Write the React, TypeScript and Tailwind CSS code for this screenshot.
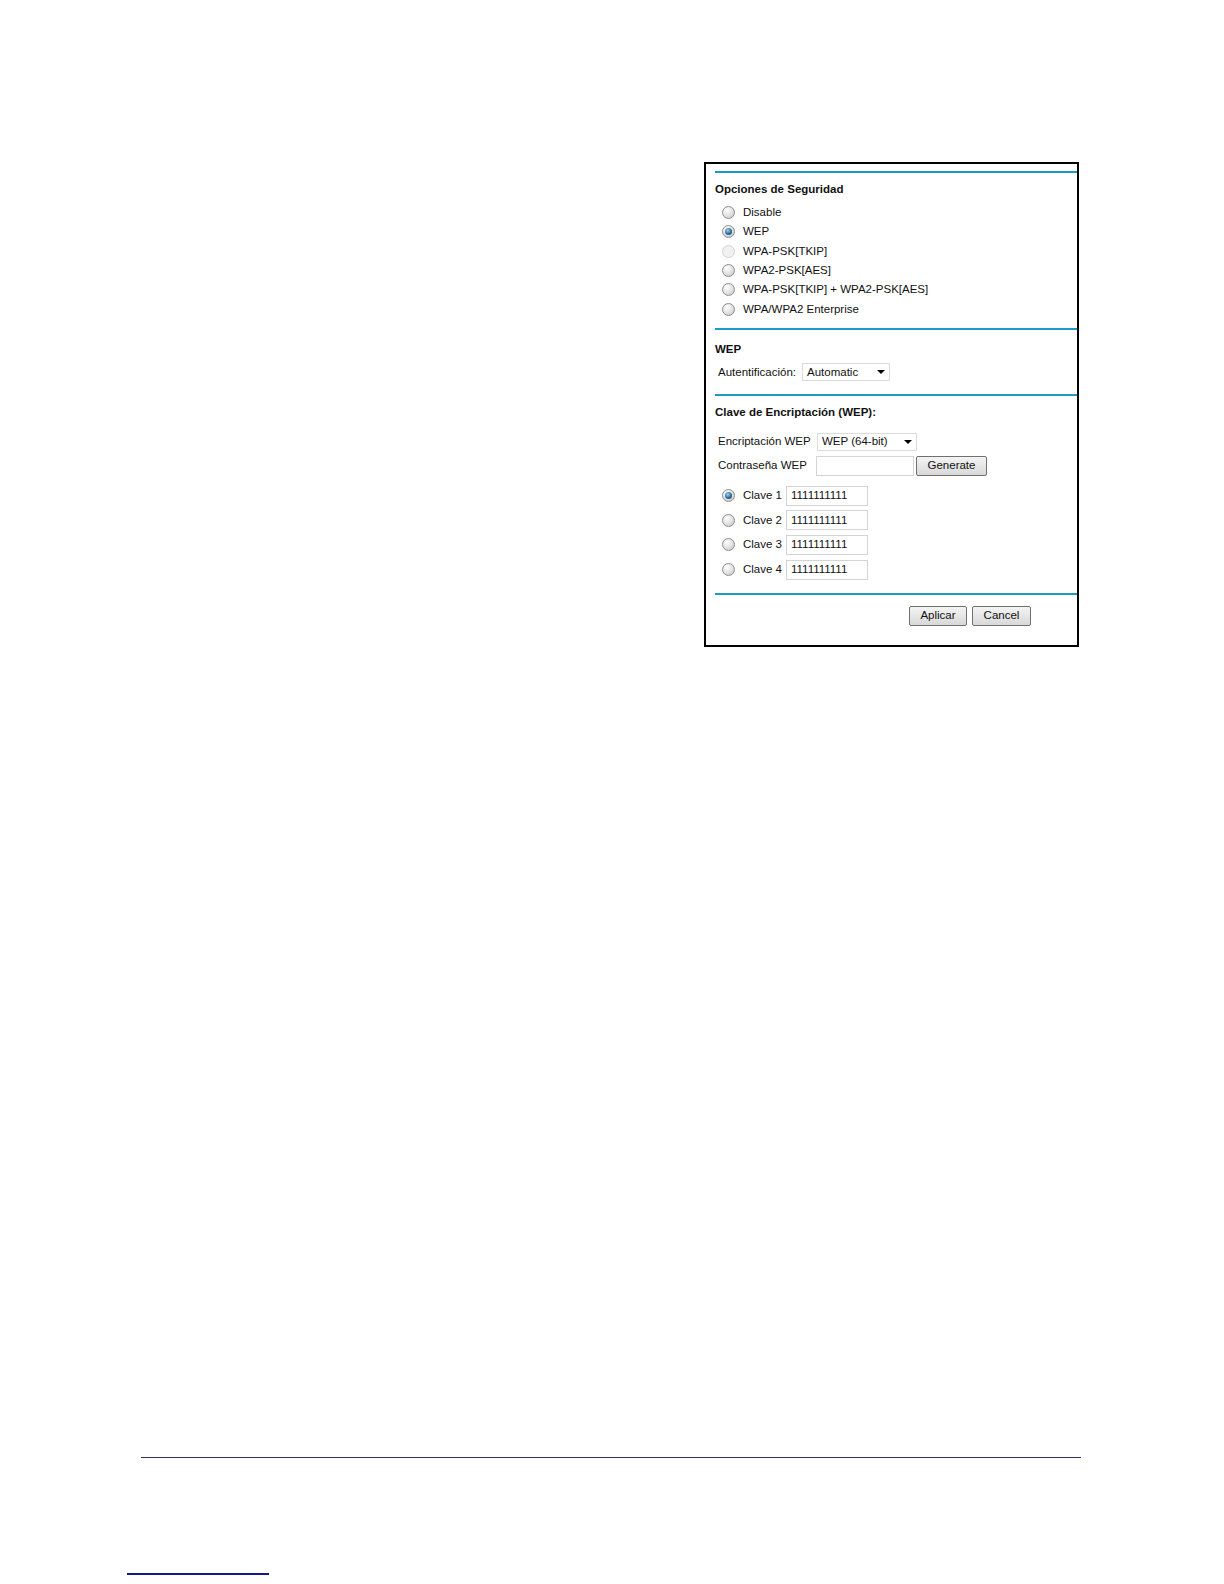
import React from "react";

const font = { fontFamily: '"Liberation Sans", Arial, sans-serif' };

function Radio({ checked = false, disabled = false }: { checked?: boolean; disabled?: boolean }) {
  if (disabled) {
    return <div className="ml-[7px] h-[13px] w-[13px] shrink-0 rounded-full border border-[#d2d2d2] bg-[#f1f1f1]" />;
  }
  return (
    <div className="ml-[7px] flex h-[13px] w-[13px] shrink-0 items-center justify-center rounded-full border border-[#8d8d8d] bg-[radial-gradient(circle_at_35%_30%,#ffffff,#e0e0e0_55%,#c0c0c0)]">
      {checked && (
        <div className="h-[7px] w-[7px] rounded-full bg-[radial-gradient(circle_at_40%_35%,#9ad6f2,#2c6c9c_55%,#0d3558)]" />
      )}
    </div>
  );
}

function Caret() {
  return <div className="h-0 w-0 border-x-[4px] border-t-[4px] border-x-transparent border-t-black" />;
}

function Select({ value, width }: { value: string; width: string }) {
  return (
    <div className={`flex h-[18px] ${width} items-center justify-between border border-[#dcdcdc] bg-white pl-[4px] pr-[4px]`}>
      <span>{value}</span>
      <Caret />
    </div>
  );
}

function Button({ label, width }: { label: string; width: string }) {
  return (
    <div
      className={`flex h-[20px] ${width} items-center justify-center rounded-[2px] border border-[#707070] bg-[linear-gradient(#f4f4f4,#e6e6e6_50%,#d8d8d8)]`}
    >
      {label}
    </div>
  );
}

function BlueLine() {
  return <div className="h-[2px] bg-[#1f98c8]" />;
}

const options = [
  { label: "Disable" },
  { label: "WEP", checked: true },
  { label: "WPA-PSK[TKIP]", disabled: true },
  { label: "WPA2-PSK[AES]" },
  { label: "WPA-PSK[TKIP] + WPA2-PSK[AES]" },
  { label: "WPA/WPA2 Enterprise" },
];

const keys = ["Clave 1", "Clave 2", "Clave 3", "Clave 4"];

export default function App() {
  return (
    <div className="h-[1584px] w-[1224px] overflow-hidden bg-white pt-[162px] text-[11.5px] text-[#111]" style={font}>
      <div className="ml-[704px] h-[485px] w-[375px] border-2 border-black pl-[9px] pt-[7px]">
        <BlueLine />
        <div className="mt-[9px] flex h-[16px] items-center font-bold">Opciones de Seguridad</div>
        <div className="mt-[5px] flex flex-col">
          {options.map((o) => (
            <div key={o.label} className="flex h-[19.3px] items-center gap-[8px]">
              <Radio checked={o.checked} disabled={o.disabled} />
              <span>{o.label}</span>
            </div>
          ))}
        </div>

        <div className="mt-[9.5px]">
          <BlueLine />
        </div>
        <div className="mt-[11px] flex h-[16px] items-center font-bold">WEP</div>
        <div className="mt-[6px] flex items-center gap-[6px] pl-[3px]">
          <span>Autentificación:</span>
          <Select value="Automatic" width="w-[88px]" />
        </div>

        <div className="mt-[12.5px]">
          <BlueLine />
        </div>
        <div className="mt-[9px] flex h-[16px] items-center font-bold">Clave de Encriptación (WEP):</div>
        <div className="mt-[12px] flex items-center pl-[3px]">
          <span className="w-[99px]">Encriptación WEP</span>
          <Select value="WEP (64-bit)" width="w-[100px]" />
        </div>
        <div className="mt-[5px] flex items-center gap-[2px] pl-[3px]">
          <span className="w-[96px]">Contraseña WEP</span>
          <div className="h-[20px] w-[98px] border border-[#d4d4d4] bg-white" />
          <Button label="Generate" width="w-[71px]" />
        </div>
        <div className="mt-[10px] flex flex-col gap-[4.6px]">
          {keys.map((k, i) => (
            <div key={k} className="flex h-[20px] items-center">
              <Radio checked={i === 0} />
              <span className="ml-[8px] w-[43px]">{k}</span>
              <div className="flex h-[20px] w-[82px] items-center border border-[#d4d4d4] bg-white pl-[4px]">1111111111</div>
            </div>
          ))}
        </div>

        <div className="mt-[13px]">
          <BlueLine />
        </div>
        <div className="mt-[11px] flex gap-[5px] pl-[194px]">
          <Button label="Aplicar" width="w-[58px]" />
          <Button label="Cancel" width="w-[59px]" />
        </div>
      </div>

      <div className="ml-[141px] mt-[810px] h-px w-[940px] bg-[#332f6a]" />
      <div className="ml-[127px] mt-[115px] h-[2px] w-[142px] bg-[#16168a]" />
    </div>
  );
}
